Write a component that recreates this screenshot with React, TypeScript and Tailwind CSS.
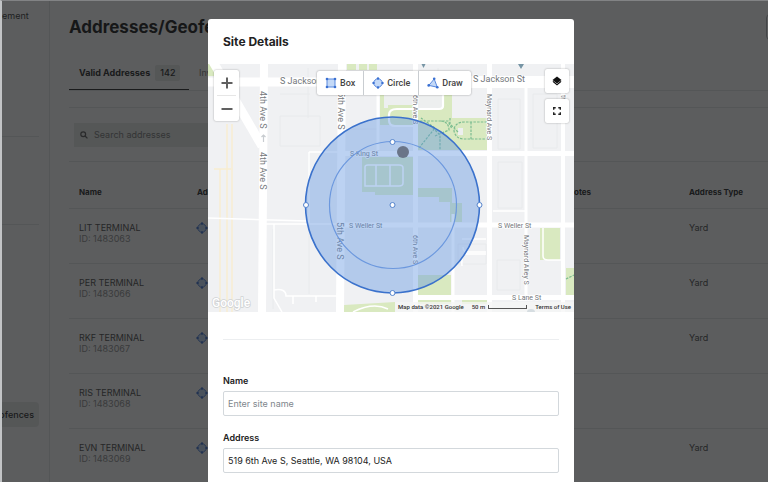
import React from "react";

const rows = [
  { name: "LIT TERMINAL", id: "1483063", type: "Yard" },
  { name: "PER TERMINAL", id: "1483066", type: "Yard" },
  { name: "RKF TERMINAL", id: "1483067", type: "Yard" },
  { name: "RIS TERMINAL", id: "1483068", type: "" },
  { name: "EVN TERMINAL", id: "1483069", type: "Yard" },
];

function CircleIcon() {
  return (
    <svg viewBox="0 0 12 12" className="size-3" aria-hidden="true">
      <circle cx="6" cy="6" r="4.2" fill="#c4d9f7" stroke="#5b8ade" strokeWidth="1" />
      <g fill="#3a70d2">
        <circle cx="6" cy="1.5" r="1.2" />
        <circle cx="6" cy="10.5" r="1.2" />
        <circle cx="1.5" cy="6" r="1.2" />
        <circle cx="10.5" cy="6" r="1.2" />
      </g>
    </svg>
  );
}

function BoxIcon() {
  return (
    <svg viewBox="0 0 12 12" className="size-3" aria-hidden="true">
      <rect x="2" y="2" width="8" height="8" fill="#c4d9f7" stroke="#5b8ade" strokeWidth="1" />
      <g fill="#3a70d2">
        <circle cx="2" cy="2" r="1.3" />
        <circle cx="10" cy="2" r="1.3" />
        <circle cx="2" cy="10" r="1.3" />
        <circle cx="10" cy="10" r="1.3" />
      </g>
    </svg>
  );
}

function DrawIcon() {
  return (
    <svg viewBox="0 0 12 12" className="size-3" aria-hidden="true">
      <path d="M7.2 2 L10.3 10.2 L1.8 8.4 Z" fill="#c4d9f7" stroke="#5b8ade" strokeWidth="1" />
      <g fill="#3a70d2">
        <circle cx="7.2" cy="1.8" r="1.3" />
        <circle cx="10.3" cy="10.2" r="1.3" />
        <circle cx="1.7" cy="8.4" r="1.3" />
      </g>
    </svg>
  );
}

function Sidebar() {
  return (
    <aside className="w-12 shrink-0 overflow-hidden border-r border-[#e4e6e8] text-[9px] leading-[12px] text-[#333]">
      <div className="h-[136px] w-[37px] border-b border-[#e4e6e8] pt-[9px]">ement</div>
      <div className="h-[88px] w-[37px] border-b border-[#e4e6e8]" />
      <a
        href="#geofences"
        className="mt-[177px] flex h-[25px] w-[37px] items-center justify-end overflow-hidden rounded-r-sm bg-[#e8ebe8] pr-[5px] font-medium text-[#222]"
      >
        Geofences
      </a>
    </aside>
  );
}

function AddressPage() {
  return (
    <main className="min-w-0 flex-1 overflow-hidden pl-[19px] text-[#484848]">
      <header className="flex h-[52px] items-center justify-between">
        <h1 className="text-[17px] leading-6 font-bold text-[#141414]">Addresses/Geofences</h1>
        <button aria-label="Create" className="-mr-[94px] h-[26px] w-24 shrink-0 rounded-sm border border-[#b0b2b4]" />
      </header>
      <div className="flex h-[38px] border-b border-[#e4e6e8] text-[9px] leading-[12px]">
        <button className="flex w-[120px] items-center gap-[5px] border-b border-[#222] pt-[3px] pl-[10px] font-bold text-[#222]">
          Valid Addresses
          <span className="rounded-xs bg-[#e6e9e6] px-[5px] py-[2px] font-medium">142</span>
        </button>
        <button className="pt-[3px] pl-[10px] text-[#777]">Invalid Addresses</button>
      </div>
      <div className="mt-4 flex h-[55px] items-center border-y border-[#e4e6e8] px-[5px]">
        <div className="flex h-6 w-2/5 items-center gap-[6px] bg-[#e6e9e6] pl-[6px]">
          <svg viewBox="0 0 10 10" className="size-2" fill="none" stroke="#555" strokeWidth="1.5" aria-hidden="true">
            <circle cx="4" cy="4" r="3" />
            <path d="M6.3 6.3 L9.3 9.3" />
          </svg>
          <input
            aria-label="Search addresses"
            placeholder="Search addresses"
            className="min-w-0 flex-1 bg-transparent text-[9px] leading-[12px] placeholder:text-[#777]"
          />
        </div>
      </div>
      <table className="w-full table-fixed border-collapse text-left text-[9px] leading-[11px]">
        <thead>
          <tr className="h-[46px] border-b border-[#e4e6e8] align-bottom text-[8px] text-[#222]">
            <th className="w-[118px] pb-[10px] pl-[10px]">Name</th>
            <th className="pb-[10px] pl-[10px]">Address</th>
            <th className="w-[121px] pb-[10px] pl-[10px]">Notes</th>
            <th className="w-[89px] pb-[10px] pl-[10px]">Address Type</th>
          </tr>
        </thead>
        <tbody>
          {rows.map((row) => (
            <tr key={row.id} className="h-[55px] border-b border-[#e4e6e8] align-top">
              <td className="pt-[13px] pl-[10px]">
                {row.name}
                <div className="text-[#8c8c8c]">ID: {row.id}</div>
              </td>
              <td className="pt-[13px] pl-[9px]">
                <CircleIcon />
              </td>
              <td />
              <td className="pt-[13px] pl-[10px]">{row.type}</td>
            </tr>
          ))}
        </tbody>
      </table>
    </main>
  );
}

function VText({ x, y, size, children }: { x: number; y: number; size: number; children: string }) {
  return (
    <text transform={`translate(${x} ${y}) rotate(90)`} fontSize={size}>
      {children}
    </text>
  );
}

function MapDrawing() {
  return (
    <svg
      viewBox="0 0 366 248"
      preserveAspectRatio="xMidYMid slice"
      className="block h-full w-full font-[family-name:Roboto,sans-serif]"
      role="img"
      aria-label="Map of the site geofence"
    >
      <rect width="366" height="248" fill="#f0f1f3" />
      <g fill="#d9e9c0">
        <path d="M0 0h6v12H0zM139 0h9v6h-9zM151 0h8v6h-8zM161 0h8v6h-8z" />
        <path d="M172 31h33v30h-33zM210 31h34v23h35v32h-69z" />
        <path d="M154 93h51v38h-38v-3h-13zM210 124h34v15h10v19h-12v-20h-11v-5h-21z" />
        <path d="M210 211h33v20h-33zM210 236h33v4h-33zM254 236h25v4h-25zM332 164h20v32h-20zM358 204h8v27h-8zM136 241l51-3v10h-51z" />
      </g>
      <path d="M176 31h29v10h-25v3h-4zM210 31h24v13h-24zM250 64h5v7h-5z" fill="#edefef" />
      <g fill="none" stroke="#f8edcf" strokeWidth="1.4">
        <path d="M6 105h17M12 105v143M19 60v188M24 60v188" />
      </g>
      <g fill="none" stroke="#e8eaec" strokeWidth="1">
        <path d="M72 52h40v30H72zM100 4v50M72 30h30M65 165v80M101 90v140M230 4v8M140 65h30v22M290 35h22v50h-22zM325 30h24v54h-24zM290 98h24v46h-24zM250 180h28v20h-28zM289 196h23v30h-23z" />
      </g>
      <g fill="none" stroke="#fff">
        <path d="M4 -4L54 82" strokeWidth="9" />
        <path d="M0 18H140" strokeWidth="9" />
        <path d="M130 18H366" strokeWidth="12" />
        <path d="M56 0L54 248" strokeWidth="8" />
        <path d="M134 0L132 248" strokeWidth="8" />
        <path d="M207.5 0V248M281.5 0V248" strokeWidth="5" />
        <path d="M355 0V248" strokeWidth="4" />
        <path d="M245 150V248M318 20V236M170 20V86" strokeWidth="3" />
        <path d="M134 89.5H366M134 161H366M208 233.5H366" strokeWidth="5" />
        <path d="M0 154L100 157M58 160H134M101 88H134M101 88V160M285 147H318M66 160v74l8 14M66 226q12-2 12 6h54M85 232v8M108 232v6" strokeWidth="1.5" />
        <path d="M335 164v28q0 4 5 4h13M254 175h24M278 188h-18q-5 0-5-5M254 202q-1-12 4-12h20" strokeWidth="1.5" />
        <path d="M145 248q20-10 35-3" strokeWidth="1.5" />
      </g>
      <g fill="none" strokeWidth="2.2" stroke="#fff">
        <path d="M235 31v11q0 3-4 3h-42q-8 0-8 6v5q0 6 6 6h18" />
        <path d="M157 103q0-2 3-2h31q4 0 4 3v15q0 3-4 3h-34zM168 101v21M182 101v21" strokeWidth="1.5" />
      </g>
      <g fill="none" stroke="#7cbd90" strokeWidth="1.2" strokeDasharray="2.5 1.2">
        <path d="M212 57h28l4 8M211 84l16-20-14-10M222 61l10 10v15M227 72l14-6q0-8-8-9M279 58h-22q-11 0-11 9 2 8 10 8h23M263 58v18M242 54v6l8 8M358 215l8-4" />
      </g>
      <g fill="#7795a5">
        <path d="M213.5 0h4l-2 4zM310 0h6l-3 5zM319 248q0-3 4-3t4 3z" />
      </g>
      <path d="M55.5 78v-7M53.5 73l2-2 2 2" fill="none" stroke="#c8ccd0" strokeWidth="1.2" />

      <g fill="#73777b" stroke="#fff" strokeWidth="1.5" paintOrder="stroke" strokeLinejoin="round">
        <text x="72" y="20" fontSize="9">S Jackson St</text>
        <text x="265" y="18" fontSize="9">S Jackson St</text>
        <VText x={52} y={27} size={9}>4th Ave S</VText>
        <VText x={52} y={88} size={9}>4th Ave S</VText>
        <VText x={130} y={28} size={9}>5th Ave S</VText>
        <VText x={129} y={158} size={9}>5th Ave S</VText>
        <VText x={205} y={31} size={7}>6th Ave S</VText>
        <VText x={205} y={171} size={7}>6th Ave S</VText>
        <VText x={279} y={30} size={7}>Maynard Ave S</VText>
        <VText x={316} y={171} size={7}>Maynard Alley S</VText>
        <VText x={353} y={31} size={7}>th</VText>
        <text x="142" y="92" fontSize="7">S King St</text>
        <text x="141" y="164" fontSize="7">S Weller St</text>
        <text x="290" y="164" fontSize="7">S Weller St</text>
        <text x="304" y="236" fontSize="7">S Lane St</text>
      </g>

      <ellipse cx="184.5" cy="141" rx="87" ry="88" fill="#6094e0" fillOpacity="0.42" stroke="#3b72cc" strokeWidth="1.6" />
      <circle cx="185" cy="141" r="63.5" fill="none" stroke="#6c98de" strokeWidth="1.2" />
      <circle cx="195" cy="88" r="6" fill="#6a7588" />
      <g fill="#fff" stroke="#5584cc" strokeWidth="1">
        <circle cx="184.5" cy="78" r="2.5" />
        <circle cx="184.5" cy="141" r="2.5" />
        <circle cx="98" cy="141" r="2.5" />
        <circle cx="271.5" cy="141" r="2.5" />
        <circle cx="184.5" cy="229" r="2.5" />
      </g>
      <text x="4" y="243" fontSize="12" fontWeight="500" fill="#fff" stroke="#cfd1d4" strokeWidth="1.5" paintOrder="stroke">
        Google
      </text>
    </svg>
  );
}

const toolButton = "flex h-6 items-center gap-[3px] px-2";
const squareButton = "flex size-6 items-center justify-center rounded-xs bg-white shadow-[0_0_2px_rgba(0,0,0,0.35)]";

function SiteMap() {
  return (
    <section className="relative h-[248px] overflow-hidden">
      <MapDrawing />
      <div className="absolute top-[6px] left-[6px] flex w-[25px] flex-col items-center rounded-xs bg-white shadow-[0_0_2px_rgba(0,0,0,0.35)]">
        <button aria-label="Zoom in" className="flex h-[25px] w-full items-center justify-center">
          <svg viewBox="0 0 12 12" className="size-3" stroke="#606060" strokeWidth="2" aria-hidden="true">
            <path d="M6 0.5V11.5M0.5 6H11.5" />
          </svg>
        </button>
        <div className="h-px w-[19px] bg-[#e6e6e6]" />
        <button aria-label="Zoom out" className="flex h-[25px] w-full items-center justify-center">
          <svg viewBox="0 0 12 12" className="size-3" stroke="#606060" strokeWidth="2" aria-hidden="true">
            <path d="M0.5 6H11.5" />
          </svg>
        </button>
      </div>
      <div className="absolute top-[7px] left-[109px] flex divide-x divide-[#c9cdd1] rounded-xs bg-white font-[family-name:Roboto,sans-serif] text-[9px] leading-[12px] font-medium text-[#444] shadow-[0_0_2px_rgba(0,0,0,0.4)]">
        <button className={toolButton}><BoxIcon />Box</button>
        <button className={toolButton}><CircleIcon />Circle</button>
        <button className={toolButton}><DrawIcon />Draw</button>
      </div>
      <div className="absolute top-[5px] right-[5px] flex flex-col gap-[6px]">
        <button aria-label="Map layers" className={squareButton}>
          <svg viewBox="0 0 10 10" className="size-[10px]" fill="#111" aria-hidden="true">
            <path d="M5 0.5L9.5 4L5 7.5L0.5 4Z" />
            <path d="M0.5 5.8L1.5 5.1L5 7.9L8.5 5.1L9.5 5.8L5 9.4Z" />
          </svg>
        </button>
        <button aria-label="Full screen" className={squareButton}>
          <svg viewBox="0 0 8 8" className="size-2" fill="none" stroke="#222" strokeWidth="1.4" aria-hidden="true">
            <path d="M0.7 2.7V0.7H2.7M5.3 0.7H7.3V2.7M7.3 5.3V7.3H5.3M2.7 7.3H0.7V5.3" />
          </svg>
        </button>
      </div>
      <div className="absolute right-0 bottom-0 flex h-[10px] items-center gap-[8px] bg-[#f5f5f5]/75 px-[3px] font-[family-name:Roboto,sans-serif] text-[6px] leading-[10px] font-medium whitespace-nowrap text-[#333]">
        <span>Map data ©2021 Google</span>
        <span className="flex items-center gap-[3px]">
          50 m
          <span className="h-[4px] w-[39px] border border-t-0 border-[#555]" />
        </span>
        <a href="#terms">Terms of Use</a>
      </div>
    </section>
  );
}

const fieldClass =
  "mt-[4px] mb-4 block h-[25px] w-full rounded-xs border border-[#d3d8dc] bg-white px-[4px] text-[9px] leading-[12px] text-[#222] placeholder:text-[#80868c]";

function SiteDialog() {
  return (
    <div
      role="dialog"
      aria-labelledby="site-title"
      className="min-h-full w-[366px] max-w-full overflow-hidden rounded-t-[3px] bg-white"
    >
      <h2 id="site-title" className="flex h-[45px] items-center px-[15px] text-[12px] leading-4 font-bold text-[#222]">
        Site Details
      </h2>
      <SiteMap />
      <form className="px-[15px] pt-[27px] text-[9px] leading-[12px]">
        <hr className="mb-[35px] border-[#eceef0]" />
        <label htmlFor="name" className="block font-semibold text-[#222]">Name</label>
        <input id="name" placeholder="Enter site name" className={fieldClass} />
        <label htmlFor="address" className="block font-semibold text-[#222]">Address</label>
        <input id="address" defaultValue="519 6th Ave S, Seattle, WA 98104, USA" className={fieldClass} />
      </form>
    </div>
  );
}

export default function App() {
  return (
    <div className="relative h-screen overflow-hidden border-t border-l-2 border-t-[#828385] border-l-[#c2c4c6] bg-white font-[family-name:Inter,sans-serif]">
      <div className="flex h-full">
        <Sidebar />
        <AddressPage />
      </div>
      <div className="absolute inset-0 flex justify-center bg-[#17181a]/70 pt-[18px] pl-3">
        <SiteDialog />
      </div>
    </div>
  );
}
